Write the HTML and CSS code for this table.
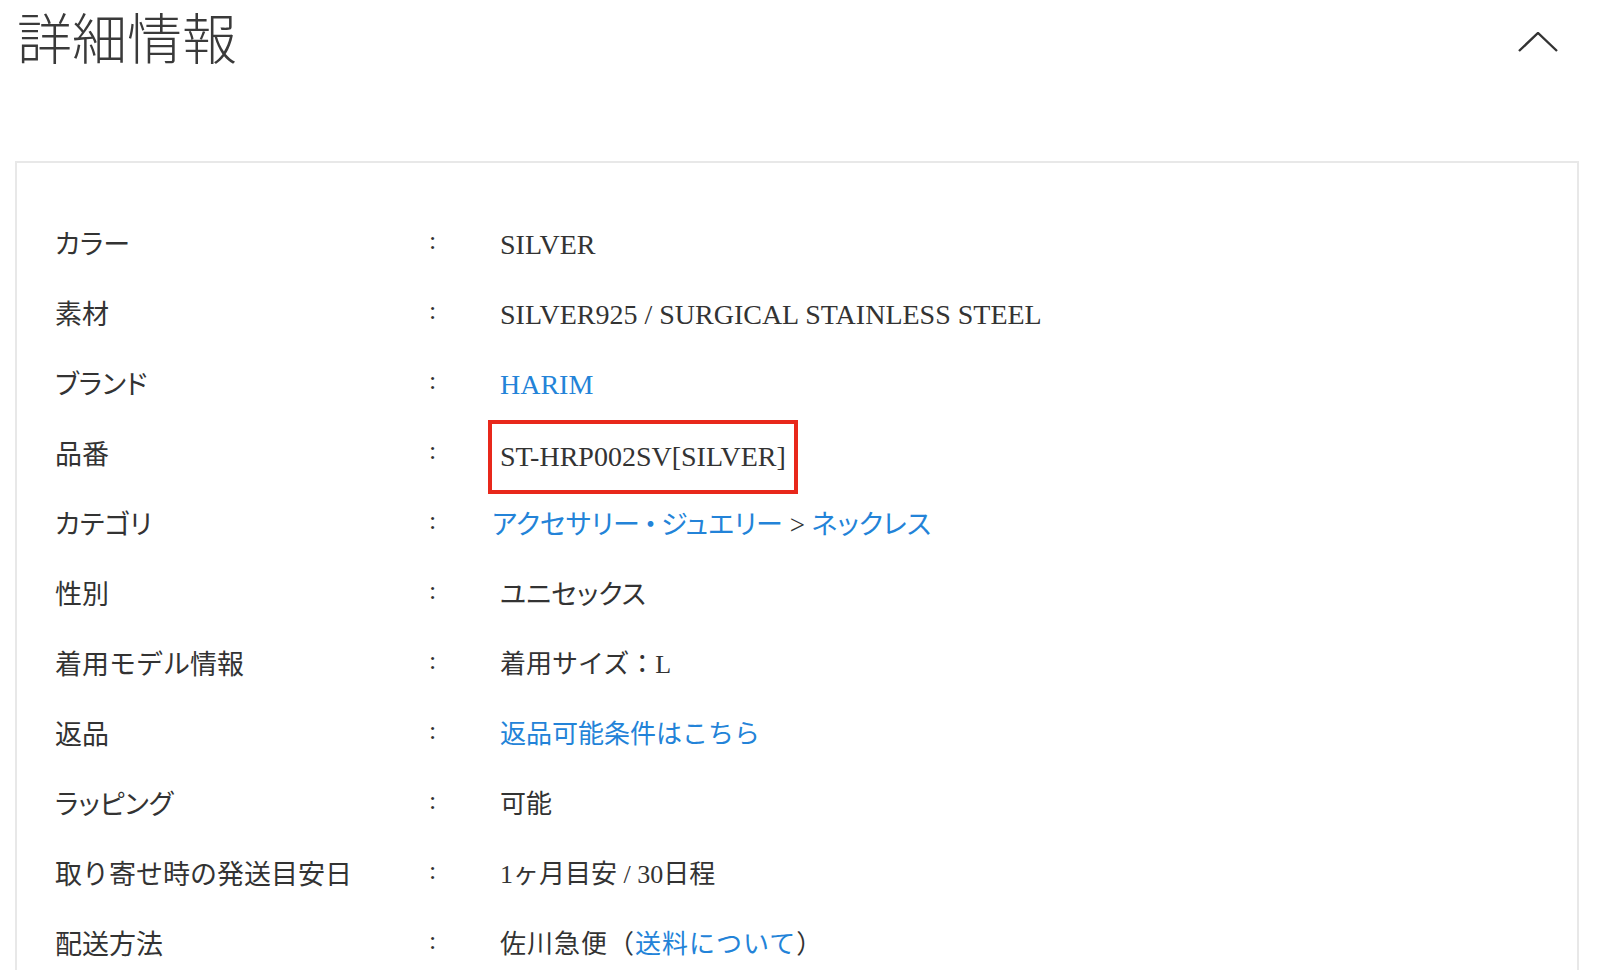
FILE: index.html
```html
<!DOCTYPE html>
<html lang="ja">
<head>
    <meta charset="UTF-8">
    <title>詳細情報</title>
    <link rel="stylesheet" href="styles.css">
</head>
<body>
    <div class="detail-head">
        <h2>詳細情報</h2>
        <span class="toggle">
            <svg width="40" height="20" viewBox="0 0 40 20"><polyline points="1,19 20,1 39,19" fill="none" stroke="#333" stroke-width="2.4"/></svg>
        </span>
    </div>
    <div class="detail-box">
        <dl class="row"><dt class="kana">カラー</dt><dd class="sep">:</dd><dd>SILVER</dd></dl>
        <dl class="row"><dt>素材</dt><dd class="sep">:</dd><dd>SILVER925 / SURGICAL STAINLESS STEEL</dd></dl>
        <dl class="row"><dt class="kana">ブランド</dt><dd class="sep">:</dd><dd><a href="#">HARIM</a></dd></dl>
        <dl class="row"><dt>品番</dt><dd class="sep">:</dd><dd><span class="mark">ST-HRP002SV[SILVER]</span></dd></dl>
        <dl class="row"><dt class="kana">カテゴリ</dt><dd class="sep">:</dd><dd class="cat"><a href="#" class="kana">アクセサリー<span class="fw">・</span>ジュエリー</a> &gt; <a href="#" class="kana">ネックレス</a></dd></dl>
        <dl class="row"><dt>性別</dt><dd class="sep">:</dd><dd class="kana">ユニセックス</dd></dl>
        <dl class="row"><dt>着用モデル情報</dt><dd class="sep">:</dd><dd class="ja">着用サイズ：L</dd></dl>
        <dl class="row"><dt>返品</dt><dd class="sep">:</dd><dd class="ja"><a href="#">返品可能条件はこちら</a></dd></dl>
        <dl class="row"><dt class="kana">ラッピング</dt><dd class="sep">:</dd><dd class="ja">可能</dd></dl>
        <dl class="row"><dt>取り寄せ時の発送目安日</dt><dd class="sep">:</dd><dd class="ja">1ヶ月目安 / 30日程</dd></dl>
        <dl class="row"><dt>配送方法</dt><dd class="sep">:</dd><dd class="ja ship">佐川急便（<a href="#">送料について</a>）</dd></dl>
    </div>
</body>
</html>
```

FILE: styles.css
```css
* {
    margin: 0;
    padding: 0;
    box-sizing: border-box;
}

body {
    font-family: "Liberation Serif", "Noto Sans CJK JP", serif;
    color: #333;
    background: #fff;
    overflow: hidden;
}

.detail-head {
    display: flex;
    justify-content: space-between;
    align-items: flex-start;
    padding: 6px 42px 0 17px;
    height: 161px;
}

.detail-head h2 {
    font-family: "Noto Sans CJK JP", sans-serif;
    font-weight: 300;
    font-size: 55px;
    line-height: 58px;
    color: #3a3a3a;
}

.toggle {
    margin-top: 26px;
    display: block;
    height: 20px;
}

.detail-box {
    margin: 0 21px 0 15px;
    border: 2px solid #e8e8e8;
    padding: 47px 38px 40px;
}

.row {
    display: grid;
    grid-template-columns: 374px 71px 1fr;
    height: 70px;
    line-height: 70px;
    font-size: 28px;
}

.row dt {
    font-family: "Noto Sans CJK JP", sans-serif;
    font-size: 27px;
    position: relative;
    top: -2px;
}

.sep {
    font-size: 26px;
    position: relative;
    top: -4px;
}

.row dd {
    white-space: nowrap;
}

.row a {
    color: #2383d8;
    text-decoration: none;
}

.kana {
    font-feature-settings: "palt";
}

.row dd.kana {
    font-size: 27px;
}

.fw {
    font-feature-settings: normal;
    margin: 0 -3px;
}

.ja {
    font-size: 26px;
}

.ship {
    letter-spacing: 1px;
}

.cat {
    margin-left: -8px;
    font-size: 27px;
}

.mark {
    display: inline-block;
    line-height: 66px;
    border: 4px solid #e8281b;
    margin-left: -12px;
    padding: 0 8px;
}
```
